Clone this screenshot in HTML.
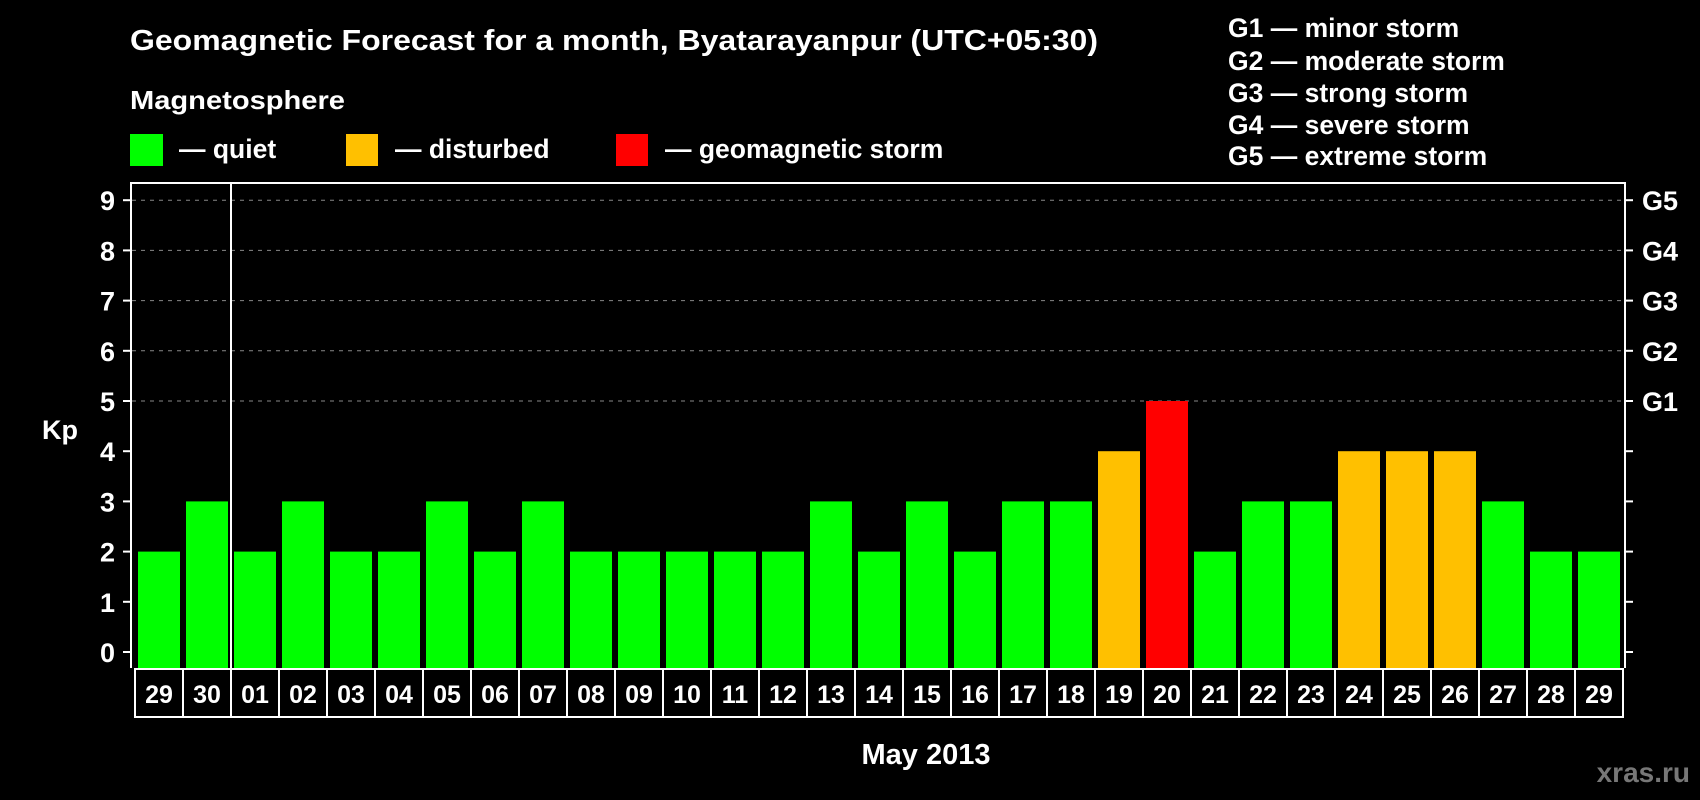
<!DOCTYPE html>
<html><head><meta charset="utf-8"><style>
html,body{margin:0;padding:0;background:#000;width:1700px;height:800px;overflow:hidden}
svg text{font-family:"Liberation Sans",Arial,sans-serif;font-weight:bold;fill:#fff}
</style></head><body>
<svg width="1700" height="800" xmlns="http://www.w3.org/2000/svg">
<rect width="1700" height="800" fill="#000"/>
<text x="130" y="50" font-size="29" textLength="968" lengthAdjust="spacingAndGlyphs">Geomagnetic Forecast for a month, Byatarayanpur (UTC+05:30)</text>
<text x="130" y="109" font-size="26" textLength="215" lengthAdjust="spacingAndGlyphs">Magnetosphere</text>
<rect x="130" y="134" width="33" height="32" fill="#00ff00"/>
<text x="179" y="158" font-size="26.5">— quiet</text>
<rect x="346" y="134" width="32" height="32" fill="#ffc000"/>
<text x="395" y="158" font-size="26.5">— disturbed</text>
<rect x="616" y="134" width="32" height="32" fill="#ff0000"/>
<text x="665" y="158" font-size="26.5">— geomagnetic storm</text>
<g font-size="26.5">
<text x="1228" y="37">G1 — minor storm</text>
<text x="1228" y="70">G2 — moderate storm</text>
<text x="1228" y="102">G3 — strong storm</text>
<text x="1228" y="134">G4 — severe storm</text>
<text x="1228" y="165">G5 — extreme storm</text>
</g>
<g id="chart"></g>
<text x="42" y="439" font-size="27">Kp</text>
<text x="926" y="764" font-size="29" text-anchor="middle">May 2013</text>
<text x="1690" y="782" font-size="28" text-anchor="end" style="fill:#777">xras.ru</text>
</svg>
<script>
var vals=[2,3,2,3,2,2,3,2,3,2,2,2,2,2,3,2,3,2,3,3,4,5,2,3,3,4,4,4,3,2,2];
var days=["29","30","01","02","03","04","05","06","07","08","09","10","11","12","13","14","15","16","17","18","19","20","21","22","23","24","25","26","27","28","29"];
var s='';
function y(v){return 652-50.2*v;}
for(var v=5;v<=9;v++)s+='<line x1="132" x2="1624" y1="'+y(v)+'" y2="'+y(v)+'" stroke="#888" stroke-width="1" stroke-dasharray="4,5"/>';
for(var v=0;v<=9;v++){
 s+='<line x1="123" x2="131" y1="'+y(v)+'" y2="'+y(v)+'" stroke="#fff" stroke-width="2"/>';
 s+='<line x1="1625" x2="1633" y1="'+y(v)+'" y2="'+y(v)+'" stroke="#fff" stroke-width="2"/>';
 s+='<text x="115" y="'+(y(v)+10)+'" font-size="27" text-anchor="end">'+v+'</text>';
 if(v>=5)s+='<text x="1642" y="'+(y(v)+10)+'" font-size="27">G'+(v-4)+'</text>';
}
for(var i=0;i<31;i++){
 var c=vals[i]==5?'#ff0000':vals[i]==4?'#ffc000':'#00ff00';
 var x=135+i*48;
 s+='<rect x="'+(x+3)+'" y="'+y(vals[i])+'" width="42" height="'+(668-y(vals[i]))+'" fill="'+c+'"/>';
 s+='<rect x="'+x+'" y="669" width="48" height="48" fill="none" stroke="#fff" stroke-width="2"/>';
 s+='<text x="'+(x+24)+'" y="703" font-size="25" text-anchor="middle">'+days[i]+'</text>';
}
s+='<line x1="231" x2="231" y1="183" y2="668" stroke="#fff" stroke-width="2"/>';
s+='<polyline points="131,668 131,183 1625,183 1625,668" fill="none" stroke="#fff" stroke-width="2"/>';
document.getElementById('chart').innerHTML=s;
</script>
</body></html>
